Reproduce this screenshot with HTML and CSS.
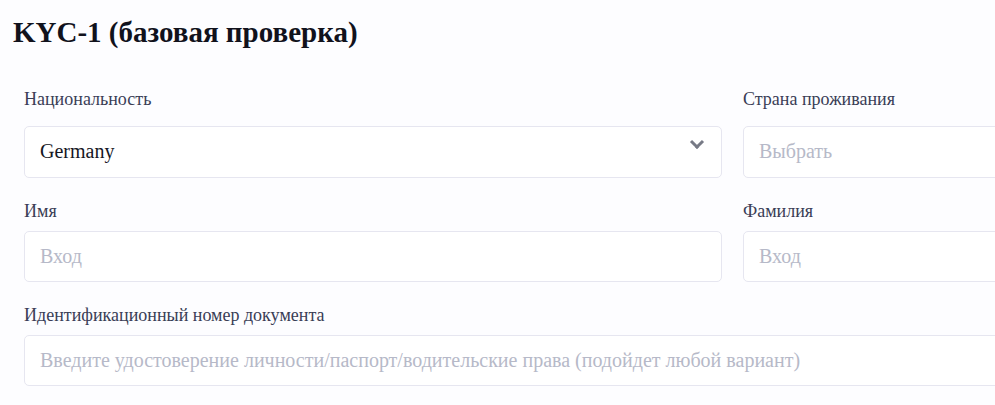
FILE: index.html
```html
<!DOCTYPE HTML>
<html>
  <head>
    <meta charset="utf-8">
    <link rel="stylesheet" href="styles.css">
  </head>
  <body>
    <div class="page">
      <h1 class="title">KYC-1 (базовая проверка)</h1>

      <div class="kyc_form">
        <div class="row">
          <div class="field">
            <label class="field_label">Национальность</label>
            <div class="select">
              <span class="select_value">Germany</span>
              <span class="chevron"></span>
            </div>
          </div>
          <div class="field">
            <label class="field_label">Страна проживания</label>
            <div class="select">
              <span class="placeholder">Выбрать</span>
            </div>
          </div>
        </div>

        <div class="row">
          <div class="field">
            <label class="field_label">Имя</label>
            <input class="input" placeholder="Вход">
          </div>
          <div class="field">
            <label class="field_label">Фамилия</label>
            <input class="input" placeholder="Вход">
          </div>
        </div>

        <div class="field">
          <label class="field_label">Идентификационный номер документа</label>
          <input class="input" placeholder="Введите удостоверение личности/паспорт/водительские права (подойдет любой вариант)">
        </div>
      </div>
    </div>
  </body>
</html>
```

FILE: styles.css
```css
* {
  box-sizing: border-box;
}

body {
  margin: 0;
  background-color: #fdfdff;
  font-family: "Liberation Serif", "Times New Roman", serif;
}

.page {
  width: 100%;
  overflow: hidden;
}

.page * {
  font-family: "Liberation Serif", "Times New Roman", serif;
}

.title {
  margin: 15px 0 36px 13px;
  font-size: 29px;
  line-height: 1.2;
  font-weight: bold;
  color: #11121c;
}

.kyc_form {
  width: 1417px;
  margin-left: 24px;
}

.row {
  display: flex;
  gap: 21px;
}

.row .field {
  flex: 1;
}

.field {
  margin-bottom: 20px;
}

.field_label {
  display: block;
  font-size: 18px;
  line-height: 27px;
  color: #3a3d56;
  margin-bottom: 6px;
}

.select {
  display: flex;
  align-items: center;
  justify-content: space-between;
  height: 52px;
  margin-top: 13px;
  padding: 0 19px 0 15px;
  background-color: #fff;
  border: 1px solid #e6e6f0;
  border-radius: 5px;
  font-size: 20px;
}

.select_value {
  color: #16171f;
}

.placeholder {
  color: #b6b9c8;
}

.chevron {
  width: 10px;
  height: 10px;
  margin-bottom: 19px;
  border-right: 3px solid #777a86;
  border-bottom: 3px solid #777a86;
  transform: rotate(45deg);
}

.input {
  display: block;
  width: 100%;
  height: 51px;
  padding: 0 15px;
  background-color: #fff;
  border: 1px solid #e6e6f0;
  border-radius: 5px;
  font-size: 20px;
  color: #16171f;
  outline: none;
}

.input::placeholder {
  color: #b6b9c8;
}
```
